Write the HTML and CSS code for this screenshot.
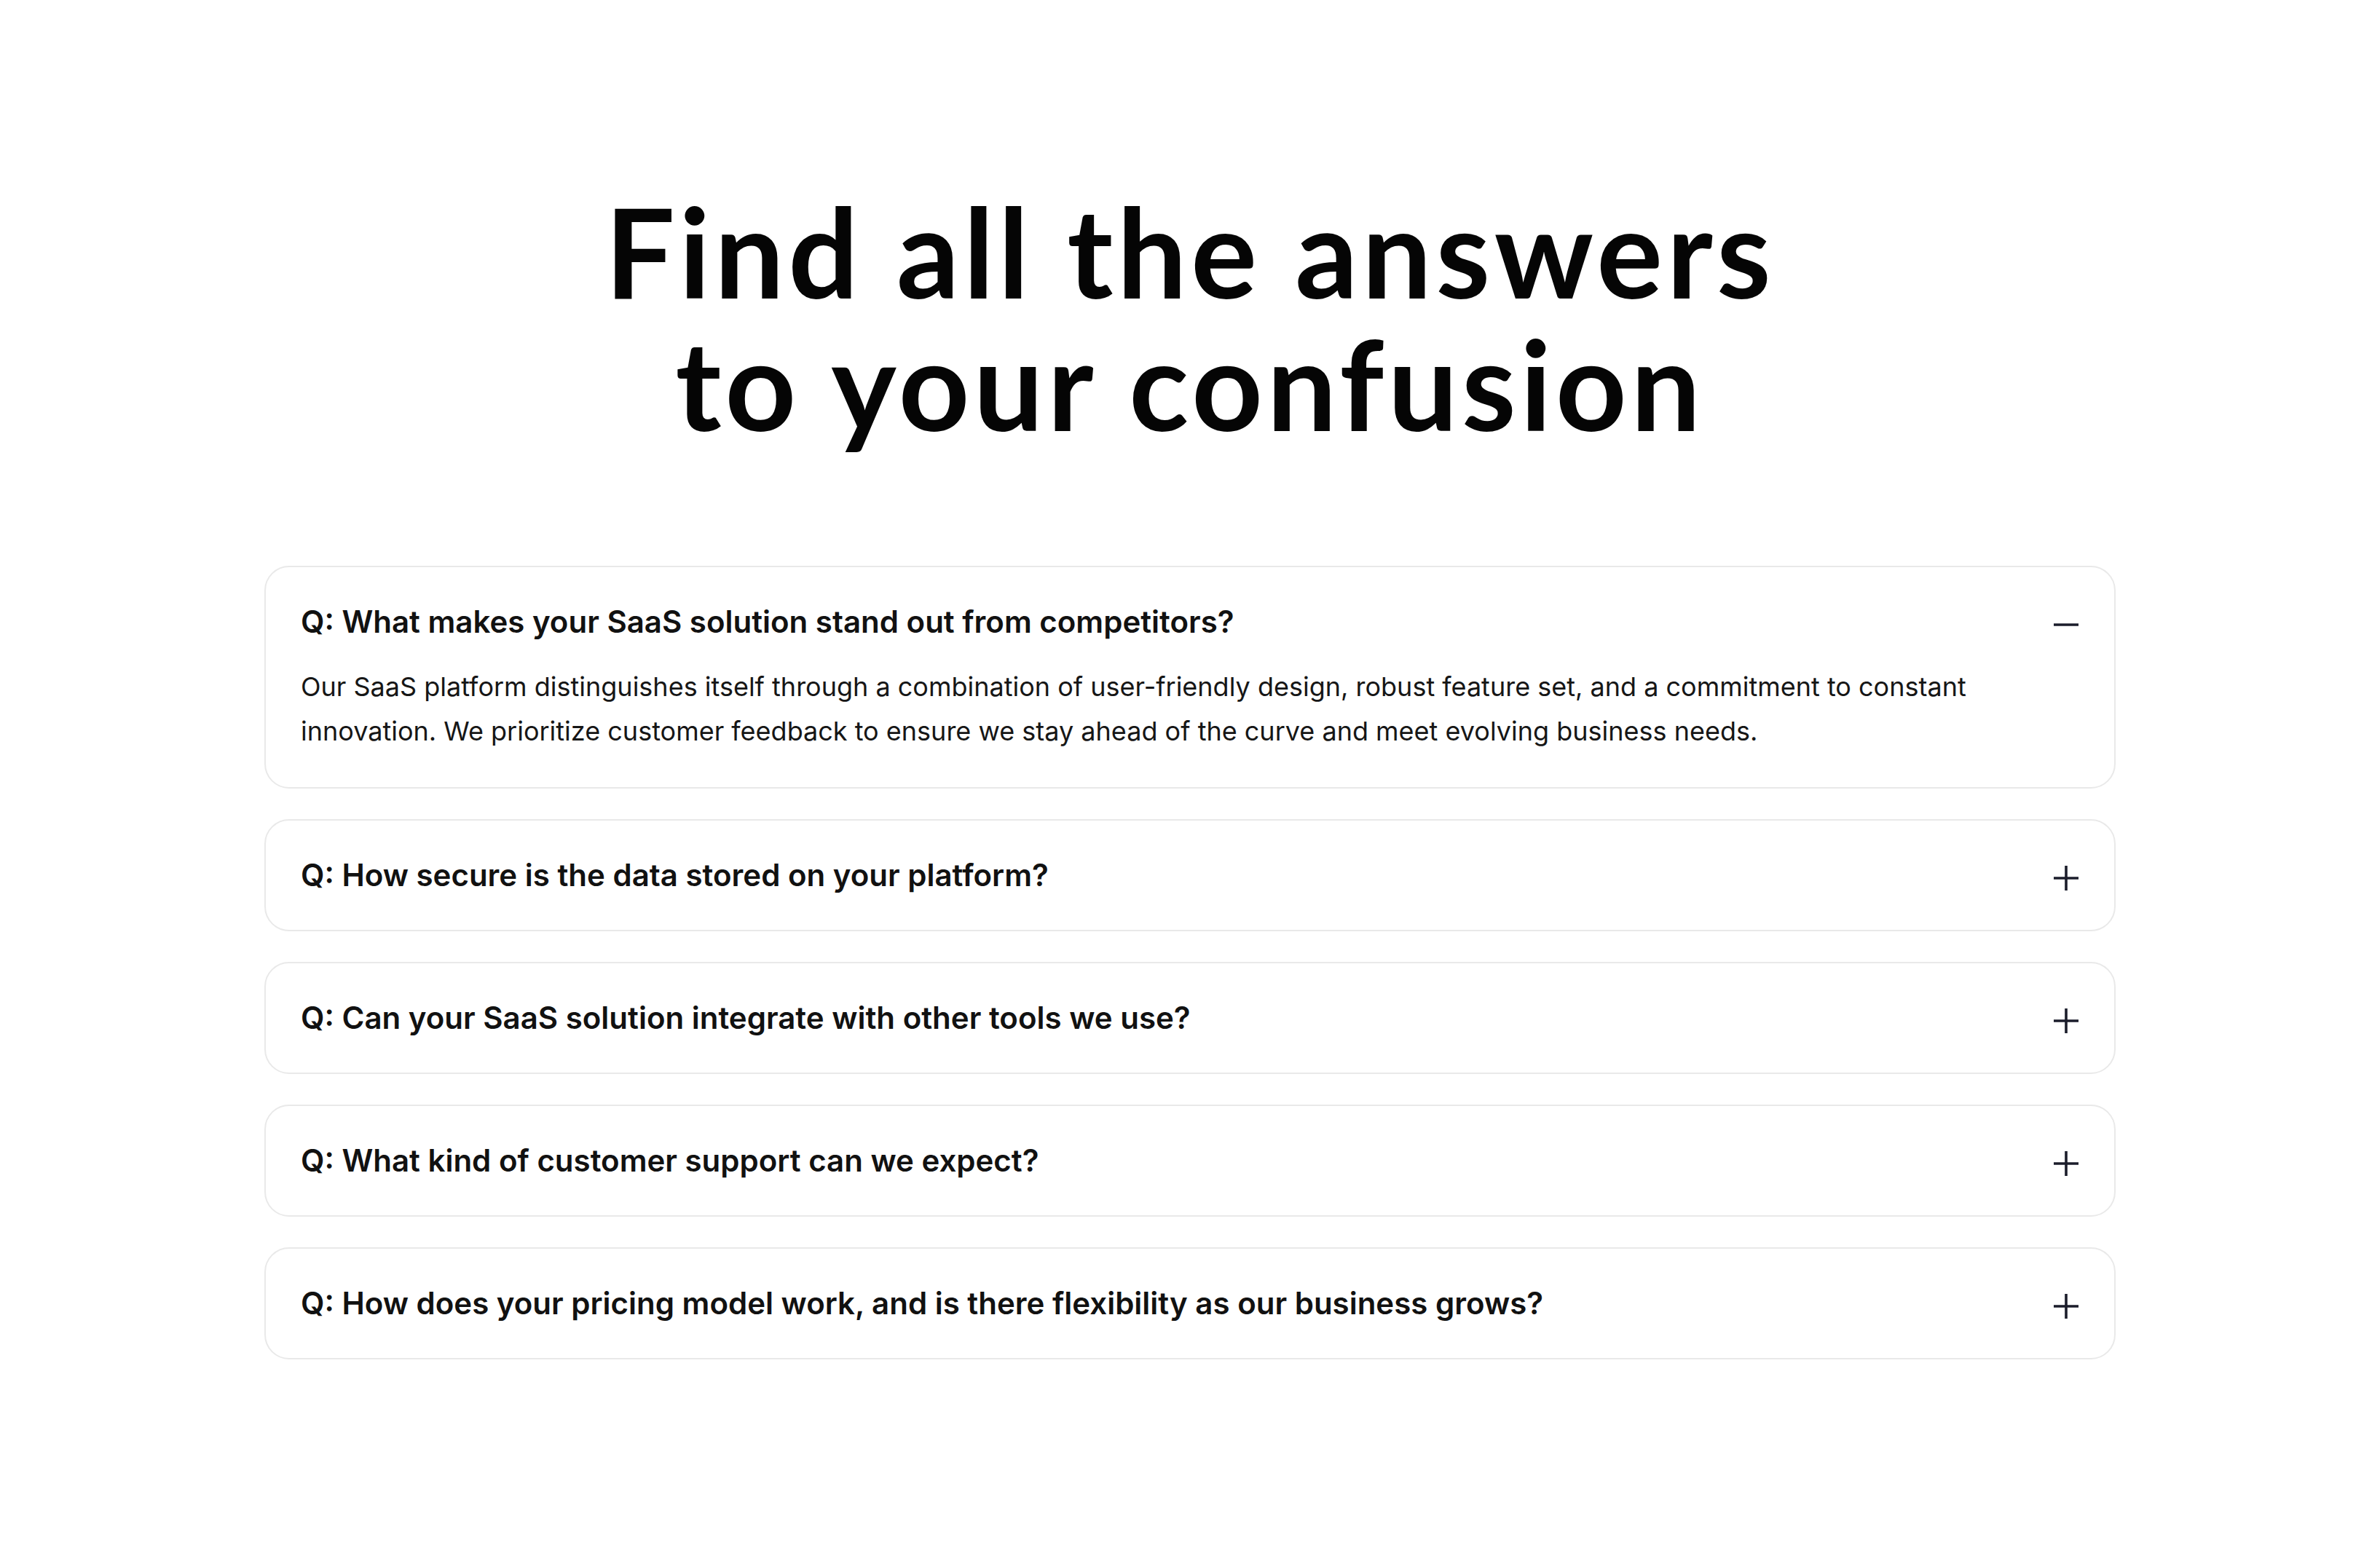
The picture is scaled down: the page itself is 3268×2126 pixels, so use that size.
FILE: index.html
```html
<!DOCTYPE html>
<html lang="en">
<head>
<meta charset="utf-8">
<title>FAQ</title>
<link rel="stylesheet" href="styles.css">
</head>
<body>
<section class="faq">
  <h1 class="faq-title">Find all the answers<br>to your confusion</h1>
  <div class="faq-list">
    <div class="faq-item is-open">
      <div class="faq-q">
        <span>Q: What makes your SaaS solution stand out from competitors?</span>
        <svg class="faq-icon" viewBox="0 0 36 36" aria-hidden="true"><path d="M1 18h34"/></svg>
      </div>
      <p class="faq-a">Our SaaS platform distinguishes itself through a combination of user-friendly design, robust feature set, and a commitment to constant innovation. We prioritize customer feedback to ensure we stay ahead of the curve and meet evolving business needs.</p>
    </div>
    <div class="faq-item">
      <div class="faq-q">
        <span>Q: How secure is the data stored on your platform?</span>
        <svg class="faq-icon" viewBox="0 0 36 36" aria-hidden="true"><path d="M1 18h34M18 1v34"/></svg>
      </div>
    </div>
    <div class="faq-item">
      <div class="faq-q">
        <span>Q: Can your SaaS solution integrate with other tools we use?</span>
        <svg class="faq-icon" viewBox="0 0 36 36" aria-hidden="true"><path d="M1 18h34M18 1v34"/></svg>
      </div>
    </div>
    <div class="faq-item">
      <div class="faq-q">
        <span>Q: What kind of customer support can we expect?</span>
        <svg class="faq-icon" viewBox="0 0 36 36" aria-hidden="true"><path d="M1 18h34M18 1v34"/></svg>
      </div>
    </div>
    <div class="faq-item">
      <div class="faq-q">
        <span>Q: How does your pricing model work, and is there flexibility as our business grows?</span>
        <svg class="faq-icon" viewBox="0 0 36 36" aria-hidden="true"><path d="M1 18h34M18 1v34"/></svg>
      </div>
    </div>
  </div>
</section>
</body>
</html>
```
FILE: styles.css
```css
html, body {
  margin: 0;
  background: #ffffff;
}

body {
  font-family: Inter, "Noto Sans", sans-serif;
  color: #111111;
}

.faq {
  padding: 253px 0 200px;
  display: flex;
  flex-direction: column;
  align-items: center;
}

.faq-title {
  margin: 0;
  font-family: Lato, "Noto Sans", sans-serif;
  font-weight: 700;
  font-size: 170px;
  line-height: 182px;
  letter-spacing: 5.5px;
  text-align: center;
  color: #050505;
}

.faq-list {
  margin-top: 160px;
  width: 2542px;
  display: flex;
  flex-direction: column;
  gap: 42px;
}

.faq-item {
  box-sizing: border-box;
  border: 2px solid #e9e9e9;
  border-radius: 34px;
  padding: 46px 48px;
  background: #ffffff;
}

.faq-q {
  display: flex;
  align-items: center;
  justify-content: space-between;
  gap: 40px;
  font-size: 42px;
  font-weight: 600;
  line-height: 58px;
  color: #111111;
}

.faq-icon {
  flex: none;
  width: 36px;
  height: 36px;
  margin-top: 8px;
  fill: none;
  stroke: #1b1d2b;
  stroke-width: 3.6;
}

.faq-a {
  margin: 30px 0 0;
  max-width: 2400px;
  font-size: 36px;
  font-weight: 400;
  line-height: 61px;
  color: #161616;
}
```
